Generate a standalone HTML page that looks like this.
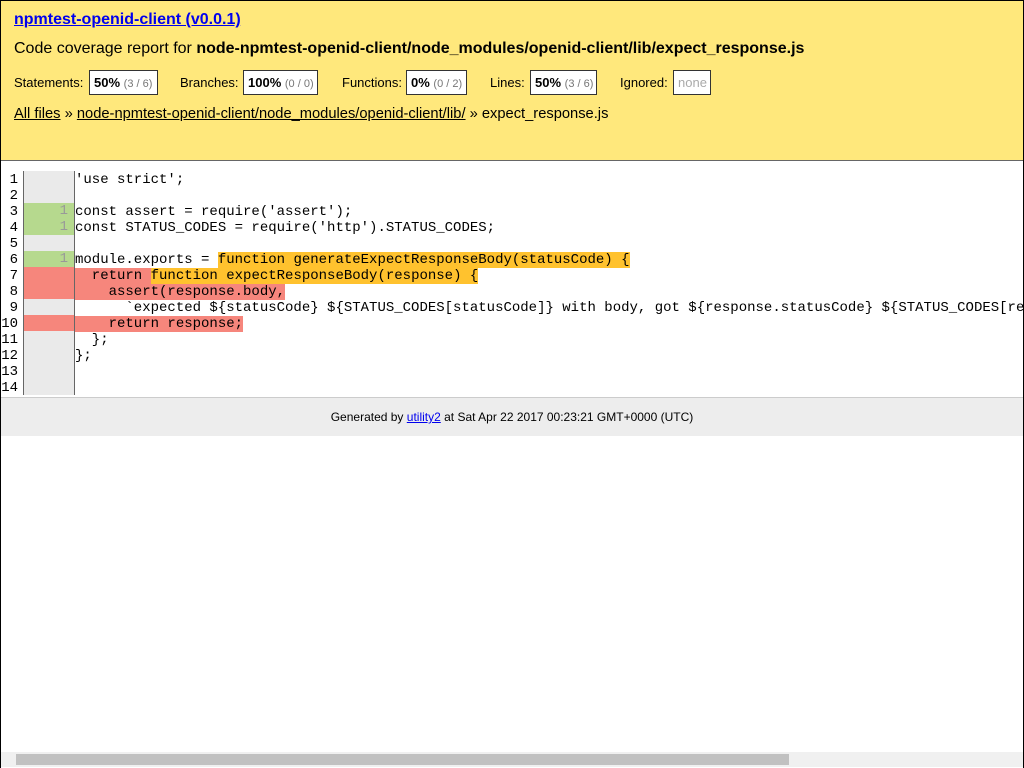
<!DOCTYPE html>
<html><head><meta charset="utf-8"><style>
*{margin:0;padding:0;box-sizing:border-box}
html,body{width:1024px;height:768px;overflow:hidden;background:#fff;font-family:"Liberation Sans",sans-serif;color:#000}
.frame{position:absolute;left:0;top:0;width:1024px;height:768px;border:1px solid #000;border-bottom:none}
.hdr{position:absolute;left:1px;top:1px;width:1022px;height:160px;background:#ffe87c;border-bottom:1px solid #666}
.abs{position:absolute;white-space:nowrap}
h1{font-size:16px;font-weight:bold}
a{color:#00e;text-decoration:underline}
.lab{font-size:13px}
.box{position:absolute;top:70px;height:25px;background:#fff;border:1px solid #333;font-size:13px;line-height:23px;padding:0 4px;white-space:nowrap}
.box b{font-size:13px}
.box span{color:#777;font-size:11px}
.code{position:absolute;top:172px;left:1px;font-family:"Liberation Mono",monospace;font-size:14px}
.row{position:absolute;height:16px;line-height:16px;white-space:pre}
.gut{position:absolute;left:23px;top:171px;width:52px;height:224px;background:#eaeaea;border-left:1px solid #666;border-right:1px solid #666}
.g{position:absolute;left:0;width:50px;height:16px;text-align:right;padding-right:6px;color:#999;font-family:"Liberation Mono",monospace;font-size:14px;line-height:16px}
.ok{background:#b6d98e}.no{background:#f6867c}
.y{background:#ffc22e}.r{background:#f6867c}
.foot{position:absolute;left:1px;top:397px;width:1022px;height:39px;background:#ededed;border-top:1px solid #ccc;font-size:12px;text-align:center;line-height:38px}
.sb{position:absolute;left:1px;top:752px;width:1022px;height:15px;background:#f0f0f0}
.th{position:absolute;left:16px;top:754px;width:773px;height:11px;background:#c1c1c1}
</style></head><body>
<div class="frame"></div>
<div class="hdr"></div>
<h1 class="abs" style="left:14px;top:11px"><a href="#">npmtest-openid-client (v0.0.1)</a></h1>
<div class="abs" style="left:14px;top:40px;font-size:16px">Code coverage report for <b>node-npmtest-openid-client/node_modules/openid-client/lib/expect_response.js</b></div>
<div class="abs lab" style="left:14px;top:75px">Statements:</div>
<div class="box" style="left:89px;width:69px"><b>50%</b> <span>(3 / 6)</span></div>
<div class="abs lab" style="left:180px;top:75px">Branches:</div>
<div class="box" style="left:243px;width:75px"><b>100%</b> <span>(0 / 0)</span></div>
<div class="abs lab" style="left:342px;top:75px">Functions:</div>
<div class="box" style="left:406px;width:61px"><b>0%</b> <span>(0 / 2)</span></div>
<div class="abs lab" style="left:490px;top:75px">Lines:</div>
<div class="box" style="left:530px;width:67px"><b>50%</b> <span>(3 / 6)</span></div>
<div class="abs lab" style="left:620px;top:75px">Ignored:</div>
<div class="box" style="left:673px;width:38px;color:#aaa">none</div>
<div class="abs" style="left:14px;top:106px;font-size:14.7px"><a href="#" style="color:#000">All files</a> » <a href="#" style="color:#000">node-npmtest-openid-client/node_modules/openid-client/lib/</a> » expect_response.js</div>

<div class="gut">
<div class="g ok" style="top:32px">1</div>
<div class="g ok" style="top:48px">1</div>
<div class="g ok" style="top:80px">1</div>
<div class="g no" style="top:96px"></div>
<div class="g no" style="top:112px"></div>
<div class="g no" style="top:144px"></div>
</div>
<div class="code">
<div class="row" style="top:0;left:0;width:17px;text-align:right">1
2
3
4
5
6
7
8
9
10
11
12
13
14</div>
<div class="row" style="left:74px;top:0">'use strict';</div>
<div class="row" style="left:74px;top:32px">const assert = require('assert');</div>
<div class="row" style="left:74px;top:48px">const STATUS_CODES = require('http').STATUS_CODES;</div>
<div class="row" style="left:74px;top:80px">module.exports = <span class="y">function generateExpectResponseBody(statusCode) {</span></div>
<div class="row" style="left:74px;top:96px"><span class="r">  return </span><span class="y">function expectResponseBody(response) {</span></div>
<div class="row" style="left:74px;top:112px"><span class="r">    assert(response.body,</span></div>
<div class="row" style="left:74px;top:128px">      `expected ${statusCode} ${STATUS_CODES[statusCode]} with body, got ${response.statusCode} ${STATUS_CODES[re</div>
<div class="row" style="left:74px;top:144px"><span class="r">    return response;</span></div>
<div class="row" style="left:74px;top:160px">  };</div>
<div class="row" style="left:74px;top:176px">};</div>
</div>
<div class="foot">Generated by <a href="#">utility2</a> at Sat Apr 22 2017 00:23:21 GMT+0000 (UTC)</div>
<div class="sb"></div><div class="th"></div>
</body></html>
